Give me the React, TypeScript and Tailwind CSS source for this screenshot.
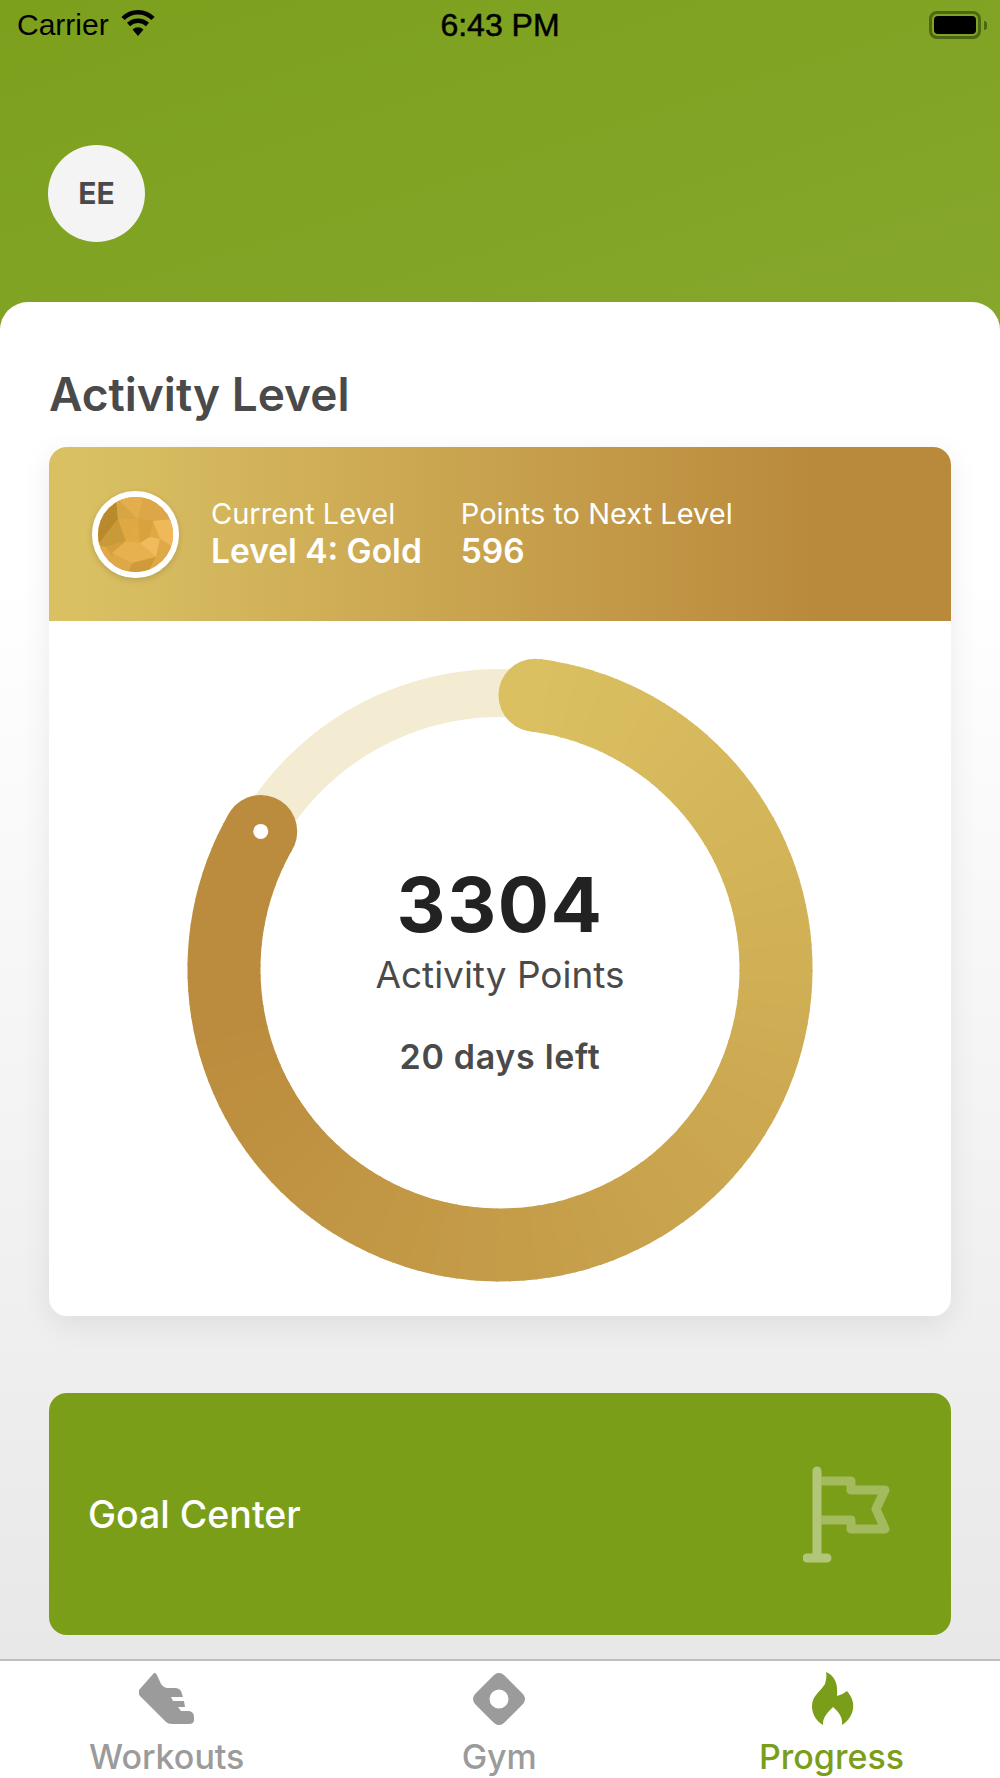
import React from "react";

const font = "font-['Inter',sans-serif]";

const StatusBar = () => (
  <div className="relative flex h-[50px] items-center justify-between pl-[17px] pr-[13px] text-black">
    <div className="flex items-center gap-[10px]">
      <span className="font-['Liberation_Sans',sans-serif] text-[30px] leading-none">Carrier</span>
      <svg width="38" height="28" viewBox="0 0 36 28" className="mt-[-4px]">
        <path d="M18 27 L12.5 20.5 A8 8 0 0 1 23.5 20.5 Z" fill="#000" />
        <path d="M8.5 15.5 A14 14 0 0 1 27.5 15.5" fill="none" stroke="#000" strokeWidth="4.5" />
        <path d="M3 9.5 A21 21 0 0 1 33 9.5" fill="none" stroke="#000" strokeWidth="4.5" />
      </svg>
    </div>
    <span className="absolute left-0 right-0 text-center font-['Liberation_Sans',sans-serif] text-[32px] leading-none [-webkit-text-stroke:0.5px_black]">
      6:43 PM
    </span>
    <div className="flex items-center gap-[3px]">
      <div className="h-[28px] w-[52px] rounded-[8px] border-[3px] border-[#4d6810] p-[2px]">
        <div className="h-full w-full rounded-[4px] bg-black" />
      </div>
      <div className="h-[9px] w-[3px] rounded-r-sm bg-[#4d6810]" />
    </div>
  </div>
);

const GoldBadge = () => (
  <div className="h-[87px] w-[87px] shrink-0 overflow-hidden rounded-full border-[6px] border-white shadow-[0_2px_6px_rgba(0,0,0,0.15)]">
    <svg viewBox="0 0 75 75" className="h-full w-full">
      <rect width="75" height="75" fill="#E0A945" />
      <polygon points="0,0 18,0 20,22 0,48" fill="#B98A2C" />
      <polygon points="0,48 20,22 28,44 8,50" fill="#C99A3A" />
      <polygon points="18,0 40,22 20,22" fill="#D8A544" />
      <polygon points="18,0 45,0 40,22" fill="#E3AE4C" />
      <polygon points="20,22 40,22 28,44" fill="#E0A840" />
      <polygon points="45,0 75,0 75,22 55,24 40,22" fill="#DDA748" />
      <polygon points="55,24 75,22 75,50 62,42" fill="#EFB858" />
      <polygon points="40,22 55,24 52,40 42,46" fill="#D9A23F" />
      <polygon points="28,44 42,46 58,60 34,66 14,56" fill="#E8B150" />
      <polygon points="42,46 52,40 62,42 58,60" fill="#F0BB5C" />
      <polygon points="62,42 75,50 70,70 58,60" fill="#E0A948" />
      <polygon points="8,50 28,44 14,56 22,72" fill="#D49F3D" />
      <polygon points="34,66 58,60 50,75 30,75" fill="#CE9A3C" />
      <polygon points="14,56 34,66 30,75 18,74" fill="#DFA846" />
    </svg>
  </div>
);

// progress arc, drawn in short pieces so the colour follows the ring
const START_DEG = 7.27;
const END_DEG = 299.9;
const PIECES = 120;
const pointAt = (deg: number) => {
  const rad = (deg * Math.PI) / 180;
  return { x: 320 + 276 * Math.sin(rad), y: 320 - 276 * Math.cos(rad) };
};
const colorAt = (t: number) => {
  const k = Math.min(1, t / 0.85);
  const mix = (a: number, b: number) => Math.round(a + (b - a) * k);
  return `rgb(${mix(218, 187)},${mix(192, 140)},${mix(97, 61)})`;
};
const pieces = Array.from({ length: PIECES }, (_, i) => {
  const step = (END_DEG - START_DEG) / PIECES;
  const a = pointAt(START_DEG + i * step);
  const b = pointAt(START_DEG + (i + 1) * step + (i < PIECES - 1 ? 0.4 : 0));
  return { d: `M${a.x} ${a.y} A276 276 0 0 1 ${b.x} ${b.y}`, color: colorAt(i / PIECES) };
});
const startPoint = pointAt(START_DEG);
const endPoint = pointAt(END_DEG);

const Ring = () => (
  <div className="relative h-[640px] w-[640px]">
    <svg width="640" height="640" viewBox="0 0 640 640">
      <circle cx="320" cy="320" r="276" fill="none" stroke="#F4ECD2" strokeWidth="48" />
      <circle cx={startPoint.x} cy={startPoint.y} r="36.5" fill={colorAt(0)} />
      {pieces.map((p) => (
        <path key={p.d} d={p.d} fill="none" stroke={p.color} strokeWidth="73" />
      ))}
      <circle cx={endPoint.x} cy={endPoint.y} r="36.5" fill={colorAt(1)} />
      <circle cx={endPoint.x} cy={endPoint.y} r="7.5" fill="#fff" />
    </svg>
    <div className="absolute inset-0 flex flex-col items-center pt-[209px]">
      <span className="text-[76px] font-bold leading-[92px] tracking-[1.5px] text-[#222222]">3304</span>
      <span className="mt-[3px] text-[37px] leading-[44px] text-[#4a4a4a]">Activity Points</span>
      <span className="mt-[40px] text-[34px] font-semibold leading-[40px] tracking-[0.7px] text-[#4a4a4a]">
        20 days left
      </span>
    </div>
  </div>
);

const Tab = ({
  label,
  active,
  className,
  children,
}: {
  label: string;
  active?: boolean;
  className?: string;
  children: React.ReactNode;
}) => (
  <div className={`flex flex-col items-center ${active ? "text-[#7b9e1a]" : "text-[#9b9b9b]"} ${className ?? ""}`}>
    <div className="flex h-[56px] items-center justify-center">{children}</div>
    <span className="mt-[10px] text-[34px] font-medium leading-[40px]">{label}</span>
  </div>
);

export default function App() {
  return (
    <div className={`flex h-[1778px] w-full flex-col overflow-hidden bg-white ${font}`}>
      <div className="h-[330px] shrink-0 bg-gradient-to-br from-[#7ca01c] to-[#86a72c]">
        <StatusBar />
        <div className="ml-[48px] mt-[95px] flex h-[97px] w-[97px] items-center justify-center rounded-full bg-[#f4f4f4] text-[30px] font-bold text-[#4a4a4a]">
          EE
        </div>
      </div>

      <div className="relative mt-[-28px] flex flex-1 flex-col rounded-t-[28px] bg-gradient-to-b from-white from-[20%] to-[#e8e8e8] px-[49px]">
        <h1 className="mt-[62px] text-[46px] font-semibold leading-[60px] text-[#4a4a4a]">Activity Level</h1>

        <div className="mt-[23px] overflow-hidden rounded-[18px] bg-white shadow-[0_8px_30px_rgba(0,0,0,0.08)]">
          <div className="flex h-[174px] items-center bg-gradient-to-r from-[#d9c063] from-[4%] to-[#ba8a3c] to-[85%] pl-[43px] text-white">
            <GoldBadge />
            <div className="ml-[32px] mt-[-2px] flex flex-col">
              <span className="text-[29px] leading-[36px]">Current Level</span>
              <span className="text-[33.5px] font-semibold leading-[38px]">Level 4: Gold</span>
            </div>
            <div className="ml-[39px] mt-[-2px] flex flex-col">
              <span className="text-[29px] leading-[36px]">Points to Next Level</span>
              <span className="text-[33.5px] font-semibold leading-[38px]">596</span>
            </div>
          </div>
          <div className="flex h-[695px] justify-center pt-[28px]">
            <Ring />
          </div>
        </div>

        <div className="mt-[77px] flex h-[242px] items-center justify-between rounded-[18px] bg-[#7b9e19] pl-[39px] pr-[56px]">
          <span className="mt-[2px] text-[37.5px] font-medium text-white">Goal Center</span>
          <svg width="92" height="100" viewBox="0 0 92 100" className="mt-[4px]">
            <path
              d="M18.5 15 H48 V24 H82 L73 43 L82 63 H48 V54 H18.5"
              fill="none"
              stroke="#fff"
              strokeOpacity="0.3"
              strokeWidth="9"
              strokeLinejoin="round"
            />
            <path d="M14 5 V92 M4 92 H24" fill="none" stroke="#fff" strokeOpacity="0.42" strokeWidth="9" strokeLinecap="round" />
          </svg>
        </div>
      </div>

      <div className="z-10 flex h-[119px] shrink-0 items-start justify-between border-t-2 border-[#bdbdbd] bg-white pl-[89px] pr-[96px] pt-[10px]">
        <Tab label="Workouts">
          <svg width="56" height="52" viewBox="138 1673 56 52" fill="currentColor">
            <path d="M153 1673 L138 1690 Q137 1695 140 1697 L165 1722 Q167 1724 171 1724 H188 Q193 1724 193 1720 V1716 Q192 1711 187 1711 H180 L177 1707 H184 L183 1701 H172 L170 1697 H182 L180 1691 Q178 1688 174 1688 H166 Q162 1687 160 1684 L156 1675 Q154 1672 153 1673 Z" />
          </svg>
        </Tab>
        <Tab label="Gym" className="mr-[5px]">
          <svg width="52" height="52" viewBox="0 0 52 52" fill="currentColor">
            <path
              fillRule="evenodd"
              d="M26 0 C29 0 31 2 33 4 L48 19 C50 21 52 23 52 26 C52 29 50 31 48 33 L33 48 C31 50 29 52 26 52 C23 52 21 50 19 48 L4 33 C2 31 0 29 0 26 C0 23 2 21 4 19 L19 4 C21 2 23 0 26 0 Z M26 16.5 A9.5 9.5 0 1 0 26 35.5 A9.5 9.5 0 1 0 26 16.5 Z"
            />
          </svg>
        </Tab>
        <Tab label="Progress" active>
          <svg width="42" height="54" viewBox="812 1672 42 54" fill="currentColor" className="ml-[4px]">
            <path d="M826 1672 C836 1676 838 1686 837 1696 C841 1695 844 1693 847 1691 C852 1697 854 1703 853 1709 C852 1716 847 1722 842 1725 C843 1718 839 1712 833 1707 C828 1712 822 1718 823 1725 C816 1721 812 1714 812 1706 C812 1696 820 1692 825 1684 C826 1680 827 1676 826 1672 Z" />
          </svg>
        </Tab>
      </div>
    </div>
  );
}
